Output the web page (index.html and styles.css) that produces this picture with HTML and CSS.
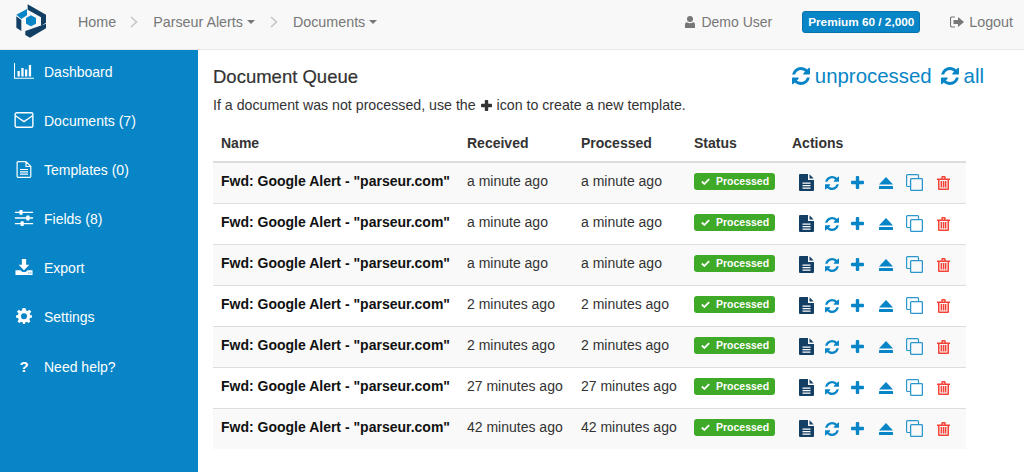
FILE: index.html
```html
<!DOCTYPE html>
<html lang="en">
<head>
<meta charset="utf-8">
<title>Document Queue</title>
<link rel="stylesheet" href="styles.css">
</head>
<body>
<svg class="defs" aria-hidden="true">
  <symbol id="i-refresh" viewBox="0 0 1536 1536"><path d="M1511 928q0 5-1 7-64 268-268 434.500t-478 166.500q-146 0-282.500-55t-243.500-157l-129 129q-19 19-45 19t-45-19-19-45v-448q0-26 19-45t45-19h448q26 0 45 19t19 45-19 45l-137 137q71 66 161 102t187 36q134 0 250-65t186-179q11-17 53-117 8-23 30-23h192q13 0 22.500 9.500t9.500 22.500zm25-800v448q0 26-19 45t-45 19h-448q-26 0-45-19t-19-45 19-45l138-138q-148-137-349-137-134 0-250 65t-186 179q-11 17-53 117-8 23-30 23h-199q-13 0-22.500-9.500t-9.500-22.500v-7q65-268 270-434.500t480-166.500q146 0 284 55.500t245 156.500l130-129q19-19 45-19t45 19 19 45z"/></symbol>
  <symbol id="i-doc" viewBox="0 0 15 17"><path d="M1 0H9V6H15V16a1 1 0 0 1-1 1H1a1 1 0 0 1-1-1V1a1 1 0 0 1 1-1Z"/><path d="M10.500 0.300L14.700 4.500H10.500Z"/><path fill="#fff" d="M3.500 8.500h8v1.300h-8zM3.500 11h8v1.300h-8zM3.500 13.500h8v1.300h-8z"/></symbol>
  <symbol id="i-plus" viewBox="0 0 13 13"><rect y="4.800" width="13" height="3.400" rx="1"/><rect x="4.800" width="3.400" height="13" rx="1"/></symbol>
  <symbol id="i-eject" viewBox="0 0 14 12"><path d="M7 0L14 7.500H0Z"/><rect y="9" width="14" height="3" rx=".5"/></symbol>
  <symbol id="i-copy" viewBox="0 0 17 17"><path fill="none" stroke="currentColor" stroke-width="1.200" d="M4.500 12.500H1.600a1 1 0 0 1-1-1V1.600a1 1 0 0 1 1-1h9.900a1 1 0 0 1 1 1V4.500"/><rect x="4.600" y="4.600" width="11.800" height="11.800" rx="1" fill="none" stroke="currentColor" stroke-width="1.300"/></symbol>
  <symbol id="i-trash" viewBox="0 0 13 14"><path d="M4.300 2.500V1.200a1.200 1.200 0 0 1 1.200-1.200h2a1.200 1.200 0 0 1 1.200 1.200V2.500H13v1.500H12V13a1 1 0 0 1-1 1H2a1 1 0 0 1-1-1V4H0V2.500ZM5.800 2.500H7.200V1.400H5.800ZM2.500 4V12.500H10.500V4Z"/><path d="M3.600 5h1.500v6.600H3.600zM5.800 5h1.500v6.600H5.800zM7.900 5h1.500v6.600H7.900z"/></symbol>
  <symbol id="i-check" viewBox="0 0 10 8"><path d="M0.800 4L3.700 6.800L9.200 1.200" fill="none" stroke="currentColor" stroke-width="2"/></symbol>
</svg>

<header class="topbar">
  <svg class="logo" viewBox="0 0 90 100" aria-hidden="true">
    <path class="logo-dark" d="M35 0L90 31V55L75 64V39L35 16Z"/>
    <path class="logo-blue" d="M1 31L33 14V33L16 44Z"/>
    <path class="logo-dark" d="M1 36L16 47V80L1 70Z"/>
    <path class="logo-dark" d="M28 80L90 58V72L42 100L28 92Z"/>
    <path class="logo-blue" d="M45 33L60 41V58L45 66L30 58V41Z"/>
  </svg>
  <nav class="crumbs">
    <a class="crumb">Home</a>
    <svg class="chev" viewBox="0 0 8 12" aria-hidden="true"><path d="M1 1L6.500 6L1 11" fill="none" stroke="currentColor" stroke-width="1.500"/></svg>
    <a class="crumb">Parseur Alerts<span class="caret"></span></a>
    <svg class="chev" viewBox="0 0 8 12" aria-hidden="true"><path d="M1 1L6.500 6L1 11" fill="none" stroke="currentColor" stroke-width="1.500"/></svg>
    <a class="crumb">Documents<span class="caret"></span></a>
  </nav>
  <div class="account">
    <a class="user"><svg class="user-icon" viewBox="0 0 10 12" aria-hidden="true"><circle cx="5" cy="3" r="3"/><path d="M0 12V8.500Q0 6.300 2 6.300Q3.500 7.300 5 7.300Q6.500 7.300 8 6.300Q10 6.300 10 8.500V12Z"/></svg>Demo User</a>
    <span class="plan">Premium 60 / 2,000</span>
    <a class="logout"><svg class="logout-icon" viewBox="0 0 14 12" aria-hidden="true"><path d="M5 1H2a1.500 1.500 0 0 0-1.500 1.500v7A1.500 1.500 0 0 0 2 11H5" fill="none" stroke="currentColor" stroke-width="1.200"/><path d="M8 1L14 6L8 11V8H3.500V4H8Z"/></svg>Logout</a>
  </div>
</header>

<div class="layout">
  <aside class="sidebar">
    <a class="side-item">
      <svg class="side-icon" viewBox="0 0 20 16" aria-hidden="true"><path d="M0.500 0V15.300H20" fill="none" stroke="currentColor" stroke-width="1.100"/><path d="M3.500 8h2.300v5.500H3.500zM7.300 5h2.300v8.500H7.300zM11 6.500h2.300v7H11zM14.800 2h2.300v11.500h-2.300z"/></svg>
      <span>Dashboard</span>
    </a>
    <a class="side-item">
      <svg class="side-icon" viewBox="0 0 18 15" aria-hidden="true"><rect x=".7" y=".7" width="16.600" height="13.600" rx="1.500" fill="none" stroke="currentColor" stroke-width="1.300"/><path d="M1 3.500L9 9L17 3.500" fill="none" stroke="currentColor" stroke-width="1.300"/></svg>
      <span>Documents (7)</span>
    </a>
    <a class="side-item">
      <svg class="side-icon icon-tall" viewBox="0 0 15 17" aria-hidden="true"><path d="M1.600 .7H9.500L14.300 5.500V15.300a1 1 0 0 1-1 1H1.600a1 1 0 0 1-1-1V1.700a1 1 0 0 1 1-1ZM9.500 .7V5.500H14.300" fill="none" stroke="currentColor" stroke-width="1.200"/><path d="M3.500 8h8v1.100h-8zM3.500 10.300h8v1.100h-8zM3.500 12.600h8v1.100h-8z"/></svg>
      <span>Templates (0)</span>
    </a>
    <a class="side-item">
      <svg class="side-icon" viewBox="0 0 16 14" aria-hidden="true"><path d="M0 1.500h16v1.200H0zM0 6.400h16v1.200H0zM0 11.300h16v1.200H0z"/><rect x="4" y="0" width="2.800" height="4.200" rx=".6"/><rect x="10" y="4.900" width="2.800" height="4.200" rx=".6"/><rect x="5" y="9.800" width="2.800" height="4.200" rx=".6"/></svg>
      <span>Fields (8)</span>
    </a>
    <a class="side-item">
      <svg class="side-icon" viewBox="0 0 16 15" aria-hidden="true"><path d="M6 0H10V5.500H13L8 10.500L3 5.500H6Z"/><path d="M0 10.500H4.500L6.500 12.300H9.500L11.500 10.500H16V15H0ZM12 12.700v1h1v-1zM14 12.700v1h1v-1z" fill-rule="evenodd"/></svg>
      <span>Export</span>
    </a>
    <a class="side-item">
      <svg class="side-icon" viewBox="0 0 16 16" aria-hidden="true"><path fill-rule="evenodd" d="M6.500 0H9.500L10 2.300L11.600 3L13.600 1.700L15.300 3.800L13.800 5.400L14.300 7L16 7.500V9.500L14 10L13.300 11.600L14.400 13.600L12.400 15L10.900 13.700L9.500 14.200L9 16H7L6.500 14.200L5 13.700L3.500 15L1.500 13.400L2.700 11.500L2 10L0 9.500V7.500L2 7L2.500 5.400L1 3.600L2.800 1.800L4.500 3L6 2.300ZM8 5.300A3 3 0 1 0 8 11.300A3 3 0 1 0 8 5.300Z"/></svg>
      <span>Settings</span>
    </a>
    <a class="side-item">
      <span class="side-glyph">?</span>
      <span>Need help?</span>
    </a>
  </aside>

  <main class="content">
    <div class="head">
      <h1 class="title">Document Queue</h1>
      <div class="refreshers">
        <a class="refresher"><svg class="refresh-big"><use href="#i-refresh"/></svg>unprocessed</a>
        <a class="refresher"><svg class="refresh-big"><use href="#i-refresh"/></svg>all</a>
      </div>
    </div>
    <p class="hint">If a document was not processed, use the <svg class="hint-plus" viewBox="0 0 13 13" aria-hidden="true"><rect y="4.500" width="13" height="4" rx=".8"/><rect x="4.500" width="4" height="13" rx=".8"/></svg> icon to create a new template.</p>
    <table class="queue">
      <colgroup><col class="c-name"><col class="c-recv"><col class="c-proc"><col class="c-stat"><col class="c-act"></colgroup>
      <thead><tr><th>Name</th><th>Received</th><th>Processed</th><th>Status</th><th>Actions</th></tr></thead>
      <tbody id="rows">
        <tr><td class="doc">Fwd: Google Alert - "parseur.com"</td><td>a minute ago</td><td>a minute ago</td><td><span class="badge"><svg class="check"><use href="#i-check"/></svg>Processed</span></td><td><div class="acts"><svg class="a-doc"><use href="#i-doc"/></svg><svg class="a-ref"><use href="#i-refresh"/></svg><svg class="a-plus"><use href="#i-plus"/></svg><svg class="a-eject"><use href="#i-eject"/></svg><svg class="a-copy"><use href="#i-copy"/></svg><svg class="a-trash"><use href="#i-trash"/></svg></div></td></tr>
        <tr><td class="doc">Fwd: Google Alert - "parseur.com"</td><td>a minute ago</td><td>a minute ago</td><td><span class="badge"><svg class="check"><use href="#i-check"/></svg>Processed</span></td><td><div class="acts"><svg class="a-doc"><use href="#i-doc"/></svg><svg class="a-ref"><use href="#i-refresh"/></svg><svg class="a-plus"><use href="#i-plus"/></svg><svg class="a-eject"><use href="#i-eject"/></svg><svg class="a-copy"><use href="#i-copy"/></svg><svg class="a-trash"><use href="#i-trash"/></svg></div></td></tr>
        <tr><td class="doc">Fwd: Google Alert - "parseur.com"</td><td>a minute ago</td><td>a minute ago</td><td><span class="badge"><svg class="check"><use href="#i-check"/></svg>Processed</span></td><td><div class="acts"><svg class="a-doc"><use href="#i-doc"/></svg><svg class="a-ref"><use href="#i-refresh"/></svg><svg class="a-plus"><use href="#i-plus"/></svg><svg class="a-eject"><use href="#i-eject"/></svg><svg class="a-copy"><use href="#i-copy"/></svg><svg class="a-trash"><use href="#i-trash"/></svg></div></td></tr>
        <tr><td class="doc">Fwd: Google Alert - "parseur.com"</td><td>2 minutes ago</td><td>2 minutes ago</td><td><span class="badge"><svg class="check"><use href="#i-check"/></svg>Processed</span></td><td><div class="acts"><svg class="a-doc"><use href="#i-doc"/></svg><svg class="a-ref"><use href="#i-refresh"/></svg><svg class="a-plus"><use href="#i-plus"/></svg><svg class="a-eject"><use href="#i-eject"/></svg><svg class="a-copy"><use href="#i-copy"/></svg><svg class="a-trash"><use href="#i-trash"/></svg></div></td></tr>
        <tr><td class="doc">Fwd: Google Alert - "parseur.com"</td><td>2 minutes ago</td><td>2 minutes ago</td><td><span class="badge"><svg class="check"><use href="#i-check"/></svg>Processed</span></td><td><div class="acts"><svg class="a-doc"><use href="#i-doc"/></svg><svg class="a-ref"><use href="#i-refresh"/></svg><svg class="a-plus"><use href="#i-plus"/></svg><svg class="a-eject"><use href="#i-eject"/></svg><svg class="a-copy"><use href="#i-copy"/></svg><svg class="a-trash"><use href="#i-trash"/></svg></div></td></tr>
        <tr><td class="doc">Fwd: Google Alert - "parseur.com"</td><td>27 minutes ago</td><td>27 minutes ago</td><td><span class="badge"><svg class="check"><use href="#i-check"/></svg>Processed</span></td><td><div class="acts"><svg class="a-doc"><use href="#i-doc"/></svg><svg class="a-ref"><use href="#i-refresh"/></svg><svg class="a-plus"><use href="#i-plus"/></svg><svg class="a-eject"><use href="#i-eject"/></svg><svg class="a-copy"><use href="#i-copy"/></svg><svg class="a-trash"><use href="#i-trash"/></svg></div></td></tr>
        <tr><td class="doc">Fwd: Google Alert - "parseur.com"</td><td>42 minutes ago</td><td>42 minutes ago</td><td><span class="badge"><svg class="check"><use href="#i-check"/></svg>Processed</span></td><td><div class="acts"><svg class="a-doc"><use href="#i-doc"/></svg><svg class="a-ref"><use href="#i-refresh"/></svg><svg class="a-plus"><use href="#i-plus"/></svg><svg class="a-eject"><use href="#i-eject"/></svg><svg class="a-copy"><use href="#i-copy"/></svg><svg class="a-trash"><use href="#i-trash"/></svg></div></td></tr>
      </tbody>
    </table>
  </main>
</div>
</body>
</html>
```

FILE: styles.css
```css
* { box-sizing: border-box; }
html, body { margin: 0; height: 100%; overflow: hidden; }
body {
  font-family: "Liberation Sans", Arial, sans-serif;
  font-size: 14px;
  line-height: 20px;
  color: #333;
  background: #fff;
  display: flex;
  flex-direction: column;
}
.defs { display: none; }

.topbar {
  height: 50px;
  flex: none;
  background: #f8f8f8;
  border-bottom: 1px solid #e7e7e7;
  display: flex;
  align-items: center;
  padding-left: 16px;
  color: #777;
}
.logo { width: 30px; height: 34px; margin-top: -8px; flex: none; }
.logo-dark { fill: #123f63; }
.logo-blue { fill: #0785c6; }
.crumbs { display: flex; align-items: center; margin-left: 32px; margin-top: -6px; }
.crumb { display: flex; align-items: center; font-size: 14.300px; }
.chev { width: 8px; height: 12px; color: #c4c4c4; margin: 0 15px 0 14px; }
.caret {
  width: 0; height: 0;
  margin: 0 1px 0 4px;
  border-left: 4.500px solid transparent;
  border-right: 4.500px solid transparent;
  border-top: 4.500px solid #777;
}
.account { margin-left: auto; display: flex; align-items: center; margin-top: -6px; padding-right: 11px; font-size: 14.300px; }
.user { display: flex; align-items: center; font-size: 14px; }
.user-icon { width: 10px; height: 12px; fill: #777; margin-right: 6px; }
.plan {
  margin-left: 30px;
  height: 22px;
  width: 118px;
  display: flex;
  align-items: center;
  justify-content: center;
  background: #0785c6;
  border: 1px solid #0672ab;
  border-radius: 3px;
  color: #fff;
  font-size: 11.800px;
  font-weight: bold;
}
.logout { display: flex; align-items: center; margin-left: 30px; }
.logout-icon { width: 14px; height: 12px; fill: #777; margin-right: 5px; }

.layout { flex: 1; display: flex; min-height: 0; }
.sidebar {
  width: 198px;
  flex: none;
  background: #0785c6;
  color: #fff;
  padding-top: 12px;
}
.side-item { height: 49.100px; display: flex; align-items: flex-start; padding-left: 14px; font-size: 14px; line-height: 20px; }
.side-icon { width: 20px; height: 16px; fill: #fff; color: #fff; margin-right: 10px; margin-top: 1px; }
.icon-tall { height: 17px; }
.side-glyph { width: 20px; margin-right: 10px; text-align: center; font-weight: bold; font-size: 15px; }

.content { flex: 1; padding: 15px 0 0 15px; min-width: 0; }
.head { display: flex; justify-content: space-between; align-items: center; height: 24px; padding-right: 40px; }
.title { margin: 0; font-size: 18.500px; font-weight: normal; line-height: 24px; -webkit-text-stroke: .2px #333; }
.refreshers { display: flex; gap: 9px; color: #0785c6; font-size: 20.400px; margin-top: -2px; }
.refresher { display: flex; align-items: center; gap: 5px; }
.refresh-big { width: 18px; height: 18px; fill: #0785c6; }
.hint { margin: 6px 0 0; height: 20px; font-size: 14.200px; }
.hint-plus { width: 11px; height: 11px; fill: #333; vertical-align: -1px; margin: 0 1px; }

.queue { width: 753px; margin-top: 10px; border-collapse: collapse; table-layout: fixed; }
.c-name { width: 246px; }
.c-recv { width: 114px; }
.c-proc { width: 113px; }
.c-stat { width: 98px; }
th { text-align: left; font-weight: bold; padding: 8px; height: 35px; vertical-align: top; border-bottom: 2px solid #ddd; }
td { padding: 8px; height: 41px; vertical-align: top; border-bottom: 1px solid #ddd; }
tbody tr:last-child td { border-bottom: 0; }
tbody tr:nth-child(odd) { background: #f9f9f9; }
.doc { font-weight: bold; color: #111; white-space: nowrap; }

.badge {
  display: flex; align-items: center;
  width: 81px; height: 17px;
  margin-top: 2px;
  padding-left: 7px;
  gap: 6px;
  background: #3fa928;
  border-radius: 3px;
  color: #fff;
  font-size: 10.500px;
  font-weight: bold;
  line-height: 17px;
}
.check { width: 9px; height: 7px; color: #fff; }

.acts { display: flex; align-items: flex-start; padding: 3px 0 0 7px; color: #0785c6; }
.acts svg { flex: none; fill: #0785c6; }
.a-doc { width: 15px; height: 17px; fill: #123f63 !important; }
.a-ref { width: 14px; height: 14px; margin: 2px 0 0 11px; }
.a-plus { width: 13px; height: 13px; margin: 2px 0 0 12px; }
.a-eject { width: 14px; height: 12px; margin: 3px 0 0 15px; }
.a-copy { width: 17px; height: 17px; margin: 0 0 0 13px; opacity: .85; }
.a-trash { width: 13px; height: 14px; margin: 2px 0 0 14px; fill: #f44336 !important; }
```
